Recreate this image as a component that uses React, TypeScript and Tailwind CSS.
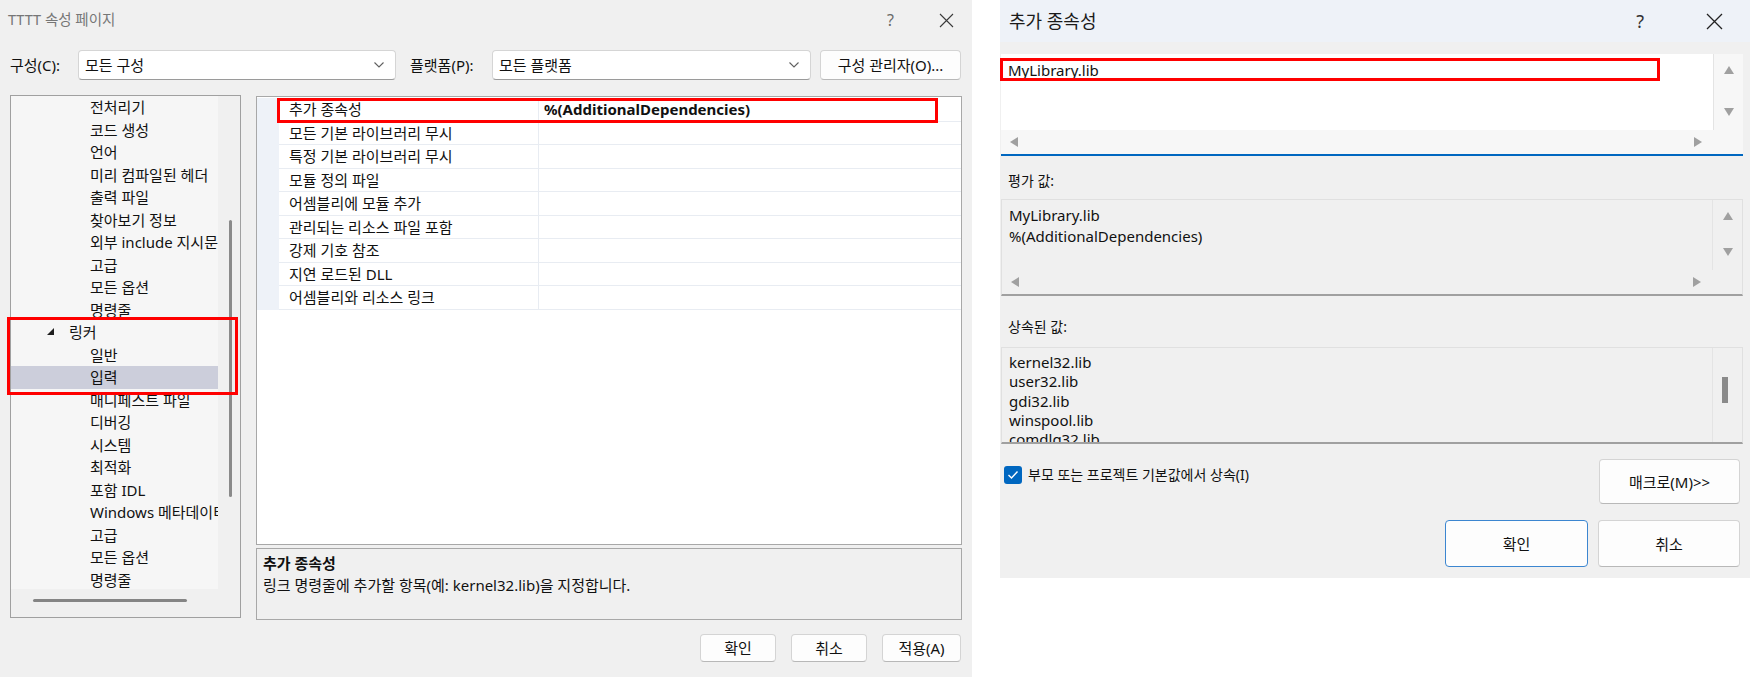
import React from "react";

const treeItems: { label: string; level?: number; open?: boolean; selected?: boolean }[] = [
  { label: "전처리기" },
  { label: "코드 생성" },
  { label: "언어" },
  { label: "미리 컴파일된 헤더" },
  { label: "출력 파일" },
  { label: "찾아보기 정보" },
  { label: "외부 include 지시문" },
  { label: "고급" },
  { label: "모든 옵션" },
  { label: "명령줄" },
  { label: "링커", level: 1, open: true },
  { label: "일반" },
  { label: "입력", selected: true },
  { label: "매니페스트 파일" },
  { label: "디버깅" },
  { label: "시스템" },
  { label: "최적화" },
  { label: "포함 IDL" },
  { label: "Windows 메타데이터" },
  { label: "고급" },
  { label: "모든 옵션" },
  { label: "명령줄" },
];

const props = [
  "추가 종속성",
  "모든 기본 라이브러리 무시",
  "특정 기본 라이브러리 무시",
  "모듈 정의 파일",
  "어셈블리에 모듈 추가",
  "관리되는 리소스 파일 포함",
  "강제 기호 참조",
  "지연 로드된 DLL",
  "어셈블리와 리소스 링크",
];

const inherited = ["kernel32.lib", "user32.lib", "gdi32.lib", "winspool.lib", "comdlg32.lib"];

function CloseIcon() {
  return (
    <svg width="15" height="15" viewBox="0 0 15 15">
      <path d="M1 1 L14 14 M14 1 L1 14" stroke="#3a3a3a" strokeWidth="1.1" fill="none" />
    </svg>
  );
}

function Chevron() {
  return (
    <svg width="12" height="8" viewBox="0 0 12 8">
      <path d="M1.5 1.5 L6 6 L10.5 1.5" stroke="#606060" strokeWidth="1.1" fill="none" />
    </svg>
  );
}

function Tri({ dir }: { dir: "up" | "down" | "left" | "right" }) {
  const pts = {
    up: "0,9 5,1 10,9",
    down: "0,1 5,9 10,1",
    left: "9,0 1,5 9,10",
    right: "1,0 9,5 1,10",
  }[dir];
  return (
    <svg width="10" height="10" viewBox="0 0 10 10">
      <polygon points={pts} fill="#a0a0a0" />
    </svg>
  );
}

function Combo({ text, w }: { text: string; w: string }) {
  return (
    <div className={`${w} h-[30px] bg-white border border-[#d5d5d5] border-b-[#9a9a9a] rounded-[4px] flex items-center pl-[6px] pr-[10px]`}>
      <span className="flex-1 text-[15px] leading-[20px]">{text}</span>
      <Chevron />
    </div>
  );
}

function Btn({ children, className = "" }: { children: React.ReactNode; className?: string }) {
  return (
    <div className={`bg-[#fdfdfd] border border-[#d4d4d4] border-b-[#b8b8b8] rounded-[4px] flex items-center justify-center text-[15px] leading-[20px] ${className}`}>
      {children}
    </div>
  );
}

function PropertyPages() {
  return (
    <div className="w-[972px] h-[677px] bg-[#f0f0f0] flex flex-col shrink-0">
      {/* title */}
      <div className="h-[40px] flex items-center pl-[8px] pr-[18px]">
        <span className="text-[14.5px] text-[#767676]">TTTT 속성 페이지</span>
        <span className="ml-auto text-[16px] text-[#6a6a6a] mr-[45px]">?</span>
        <CloseIcon />
      </div>

      {/* config row */}
      <div className="mt-[10px] h-[30px] flex items-center">
        <span className="pl-[10px] w-[78px] text-[15px]">구성(C):</span>
        <Combo text="모든 구성" w="w-[318px]" />
        <span className="ml-[14px] w-[82px] text-[15px]">플랫폼(P):</span>
        <Combo text="모든 플랫폼" w="w-[319px]" />
        <Btn className="ml-[9px] w-[141px] h-[30px]">구성 관리자(O)...</Btn>
      </div>

      {/* main */}
      <div className="mt-[15px] h-[525px] flex">
        {/* tree */}
        <div className="relative ml-[10px] w-[231px] h-[523px] border border-[#a0a0a0] flex flex-col">
          <div className="flex-1 flex overflow-hidden">
            <div className="w-[207px] bg-[#f6f6f6] overflow-hidden">
              {treeItems.map((it, i) => (
                <div
                  key={i}
                  className={`h-[22.5px] flex items-center whitespace-nowrap text-[15px] ${it.selected ? "bg-[#cccedb]" : ""} ${it.level === 1 ? "pl-[36px]" : "pl-[79px]"}`}
                >
                  {it.level === 1 && (
                    <svg width="8" height="8" viewBox="0 0 8 8" className="mr-[14px]">
                      <polygon points="7,0 7,7 0,7" fill="#1e1e1e" />
                    </svg>
                  )}
                  {it.label}
                </div>
              ))}
            </div>
            <div className="flex-1 bg-[#f0f0f0] relative">
              <div className="absolute left-[11px] top-[124px] w-[3px] h-[277px] bg-[#8a8a8a] rounded-full" />
            </div>
          </div>
          <div className="h-[28px] bg-[#f0f0f0] relative">
            <div className="absolute left-[22px] top-[10px] w-[154px] h-[3px] bg-[#858585] rounded-full" />
          </div>
          <div className="absolute left-[-4px] top-[221px] w-[231px] h-[78px] border-[3px] border-[#ff0000] pointer-events-none" />
        </div>

        {/* right column */}
        <div className="ml-[15px] w-[706px] flex flex-col">
          <div className="relative mt-[1px] h-[449px] bg-white border border-[#a8a8a8] pt-[1px]">
            <div className="flex">
              <div className="w-[22px] bg-[#eef2f8]" />
              <div className="flex-1">
                {props.map((p, i) => (
                  <div key={i} className="h-[23.5px] flex border-b border-[#e8ecf2] text-[15px]">
                    <div className="w-[260px] pl-[10px] flex items-center border-r border-[#e8ecf2] whitespace-nowrap">{p}</div>
                    <div className="flex-1 pl-[5px] flex items-center font-bold">
                      {i === 0 ? "%(AdditionalDependencies)" : ""}
                    </div>
                  </div>
                ))}
              </div>
            </div>
            <div className="absolute left-[20px] top-[1px] w-[661px] h-[25px] border-[3px] border-[#ff0000] pointer-events-none" />
          </div>
          <div className="mt-[3px] h-[72px] bg-[#f0f0f0] border border-[#a8a8a8] px-[6px] pt-[3px] text-[15px] leading-[22px]">
            <div className="font-bold">추가 종속성</div>
            <div>링크 명령줄에 추가할 항목(예: kernel32.lib)을 지정합니다.</div>
          </div>
        </div>
      </div>

      {/* buttons */}
      <div className="mt-[14px] h-[28px] flex justify-end pr-[11px] gap-[15px]">
        <Btn className="w-[76px] h-[28px]">확인</Btn>
        <Btn className="w-[76px] h-[28px]">취소</Btn>
        <Btn className="w-[79px] h-[28px]">적용(A)</Btn>
      </div>
    </div>
  );
}

function ScrollBox({
  lines,
  bg,
  thumb,
  leading,
  children,
  className = "",
}: {
  lines: string[];
  bg: string;
  thumb?: boolean;
  leading: string;
  children?: React.ReactNode;
  className?: string;
}) {
  return (
    <div className={`relative ml-[1px] w-[742px] flex flex-col ${className}`}>
      <div className="flex-1 flex overflow-hidden">
        <div className={`flex-1 ${bg} pl-[7px] pt-[5px] text-[15px] ${leading} overflow-hidden`}>
          {lines.map((l, i) => (
            <div key={i} className="whitespace-nowrap">{l}</div>
          ))}
        </div>
        <div className="w-[30px] border-l border-[#e4e4e4] flex flex-col items-center justify-between pt-[11px] pb-[13px] relative">
          {thumb ? (
            <div className="absolute left-[9px] top-[29px] w-[6px] h-[26px] bg-[#8a8a8a]" />
          ) : (
            <>
              <Tri dir="up" />
              <Tri dir="down" />
            </>
          )}
        </div>
      </div>
      {!thumb && (
        <div className="h-[24px] flex items-center justify-between pl-[8px] pr-[40px]">
          <Tri dir="left" />
          <Tri dir="right" />
        </div>
      )}
      {children}
    </div>
  );
}

function AddDeps() {
  return (
    <div className="ml-[28px] w-[750px] h-[578px] bg-[#f0f0f0] flex flex-col shrink-0">
      <div className="h-[42px] bg-[#eef2f8] flex items-center pl-[9px] pr-[27px]">
        <span className="text-[18px] text-[#1a1a1a]">추가 종속성</span>
        <span className="ml-auto text-[18px] text-[#333] mr-[62px]">?</span>
        <svg width="17" height="17" viewBox="0 0 17 17">
          <path d="M1 1 L16 16 M16 1 L1 16" stroke="#222" strokeWidth="1.3" fill="none" />
        </svg>
      </div>

      <ScrollBox
        lines={["MyLibrary.lib"]}
        bg="bg-white"
        leading="leading-[22px]"
        className="mt-[12px] h-[102px] bg-[#f7f7f7] border-b-2 border-[#0067c0]"
      >
        <div className="absolute left-[-1px] top-[4px] w-[660px] h-[23px] border-[3px] border-[#ff0000] pointer-events-none" />
      </ScrollBox>

      <div className="h-[43px] pt-[16px] pl-[8px] text-[14px] leading-[18px]">평가 값:</div>
      <ScrollBox
        lines={["MyLibrary.lib", "%(AdditionalDependencies)"]}
        bg="bg-[#f0f0f0]"
        leading="leading-[21px]"
        className="h-[97px] border border-[#e0e0e0] border-b-2 border-b-[#a0a0a0]"
      />

      <div className="h-[51px] pt-[22px] pl-[8px] text-[14px] leading-[18px]">상속된 값:</div>
      <ScrollBox
        lines={inherited}
        bg="bg-[#f0f0f0]"
        thumb
        leading="leading-[19.3px]"
        className="h-[97px] border border-[#e0e0e0] border-b-2 border-b-[#a0a0a0]"
      />

      <div className="mt-[15px] h-[45px] flex pr-[10px]">
        <div className="ml-[4px] mt-[7px] flex items-start gap-[6px]">
          <div className="w-[18px] h-[18px] bg-[#0067c0] rounded-[3px] flex items-center justify-center">
            <svg width="12" height="10" viewBox="0 0 12 10">
              <path d="M1.5 5 L4.5 8 L10.5 1.5" stroke="white" strokeWidth="1.4" fill="none" />
            </svg>
          </div>
          <span className="text-[14px] leading-[18px]">부모 또는 프로젝트 기본값에서 상속(I)</span>
        </div>
        <Btn className="ml-auto w-[141px] h-[45px]">매크로(M)&gt;&gt;</Btn>
      </div>

      <div className="mt-[16px] h-[47px] flex justify-end gap-[10px] pr-[10px]">
        <Btn className="w-[143px] h-[47px] !border-[#3c86d0]">확인</Btn>
        <Btn className="w-[142px] h-[47px]">취소</Btn>
      </div>
    </div>
  );
}

export default function App() {
  return (
    <div className="w-[1750px] h-[677px] bg-white flex items-start overflow-hidden font-['Noto_Sans','Noto_Sans_CJK_KR',sans-serif] text-[#111]">
      <PropertyPages />
      <AddDeps />
    </div>
  );
}
